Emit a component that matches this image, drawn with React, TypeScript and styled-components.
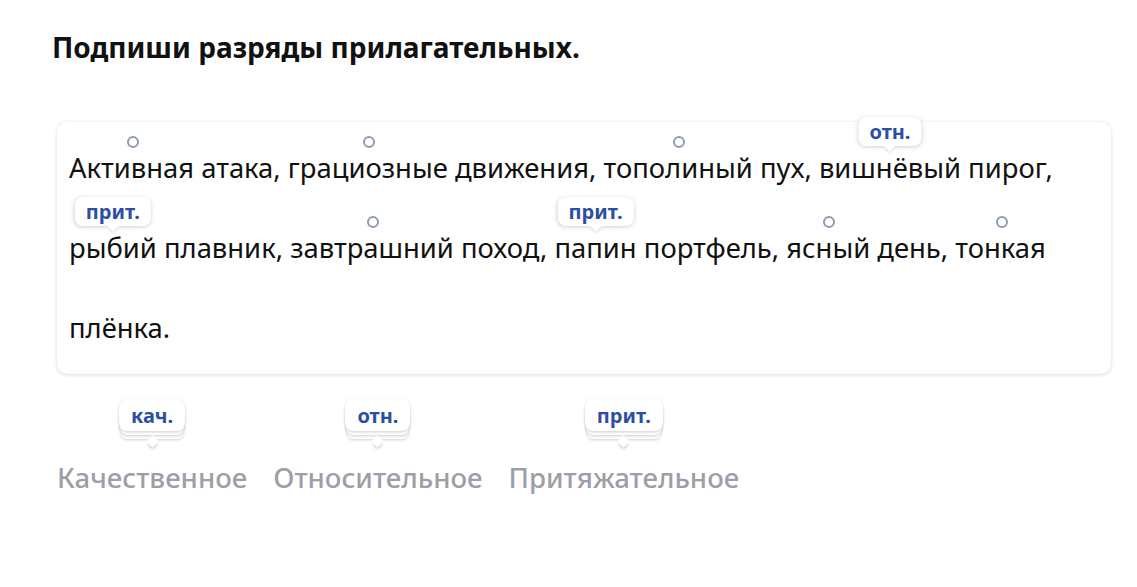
import React from "react";
import styled, { createGlobalStyle } from "styled-components";

const Global = createGlobalStyle`
  html, body { margin: 0; padding: 0; background: #fff; }
  body { font-family: "Noto Sans", "Open Sans", sans-serif; color: #111; }
`;

const Page = styled.div`
  padding: 29px 26px 0 52px;
`;

const Title = styled.h1`
  margin: 0;
  font-size: 28px;
  line-height: 36px;
  font-weight: 700;
  color: #111;
`;

const Card = styled.div`
  margin: 57px 0 0 5px;
  width: 1054px;
  box-sizing: border-box;
  padding: 6px 12px;
  background: #fff;
  border-radius: 10px;
  box-shadow: 0 1px 4px rgba(0, 0, 0, 0.14), 0 0 1px rgba(0, 0, 0, 0.08);
`;

const Line = styled.div`
  font-size: 27.4px;
  line-height: 80px;
  white-space: nowrap;
  color: #111;
`;

const Word = styled.span`
  position: relative;
`;

const Dot = styled.span`
  position: absolute;
  left: 50%;
  top: -13px;
  width: 8px;
  height: 8px;
  margin-left: -5px;
  border: 2px solid #8d9cb6;
  border-radius: 50%;
  background: #fff;
`;

const Tag = styled.span`
  position: absolute;
  left: 50%;
  bottom: calc(100% + 3px);
  transform: translateX(-50%);
  padding: 0 11px;
  height: 29px;
  display: flex;
  align-items: center;
  background: #fff;
  border-radius: 8px;
  box-shadow: 0 1px 4px rgba(0, 0, 0, 0.18);
  font-size: 20px;
  font-weight: 700;
  line-height: 1;
  color: #2b4fa6;
  white-space: nowrap;
  &::after {
    content: "";
    position: absolute;
    left: 50%;
    bottom: -4px;
    width: 8px;
    height: 8px;
    margin-left: -4px;
    background: #fff;
    transform: rotate(45deg);
    box-shadow: 2px 2px 3px -1px rgba(0, 0, 0, 0.15);
  }
`;

const Bank = styled.div`
  display: flex;
  gap: 26px;
  margin: 25px 0 0 5px;
`;

const Option = styled.div`
  display: flex;
  flex-direction: column;
  align-items: center;
`;

const Stack = styled.div`
  position: relative;
  height: 32px;
  padding: 0 12px;
  display: flex;
  align-items: center;
  background: #fff;
  border-radius: 8px;
  font-size: 20px;
  font-weight: 700;
  color: #2b4fa6;
  box-shadow:
    0 1px 3px rgba(0, 0, 0, 0.2),
    0 5px 0 -1px #fff,
    0 6px 3px -1px rgba(0, 0, 0, 0.2),
    0 10px 0 -2px #fff,
    0 11px 3px -2px rgba(0, 0, 0, 0.18);
  margin-bottom: 29px;
  &::after {
    content: "";
    position: absolute;
    left: 50%;
    bottom: -15px;
    width: 9px;
    height: 9px;
    margin-left: -4.5px;
    background: #fff;
    transform: rotate(45deg);
    box-shadow: 2px 2px 3px -1px rgba(0, 0, 0, 0.22);
  }
`;

const Label = styled.div`
  font-size: 27.6px;
  line-height: 34px;
  font-weight: 500;
  color: #9c9fa8;
`;

type Mark = "dot" | "отн." | "прит." | "кач.";

const Adj: React.FC<{ mark: Mark; children: React.ReactNode }> = ({ mark, children }) => (
  <Word>
    {mark === "dot" ? <Dot /> : <Tag>{mark}</Tag>}
    {children}
  </Word>
);

export default function App() {
  return (
    <>
      <Global />
      <Page>
        <Title>Подпиши разряды прилагательных.</Title>
        <Card>
          <Line>
            <Adj mark="dot">Активная</Adj> атака, <Adj mark="dot">грациозные</Adj> движения,{" "}
            <Adj mark="dot">тополиный</Adj> пух, <Adj mark="отн.">вишнёвый</Adj> пирог,
          </Line>
          <Line>
            <Adj mark="прит.">рыбий</Adj> плавник, <Adj mark="dot">завтрашний</Adj> поход,{" "}
            <Adj mark="прит.">папин</Adj> портфель, <Adj mark="dot">ясный</Adj> день,{" "}
            <Adj mark="dot">тонкая</Adj>
          </Line>
          <Line>плёнка.</Line>
        </Card>
        <Bank>
          <Option>
            <Stack>кач.</Stack>
            <Label>Качественное</Label>
          </Option>
          <Option>
            <Stack>отн.</Stack>
            <Label>Относительное</Label>
          </Option>
          <Option>
            <Stack>прит.</Stack>
            <Label>Притяжательное</Label>
          </Option>
        </Bank>
      </Page>
    </>
  );
}
